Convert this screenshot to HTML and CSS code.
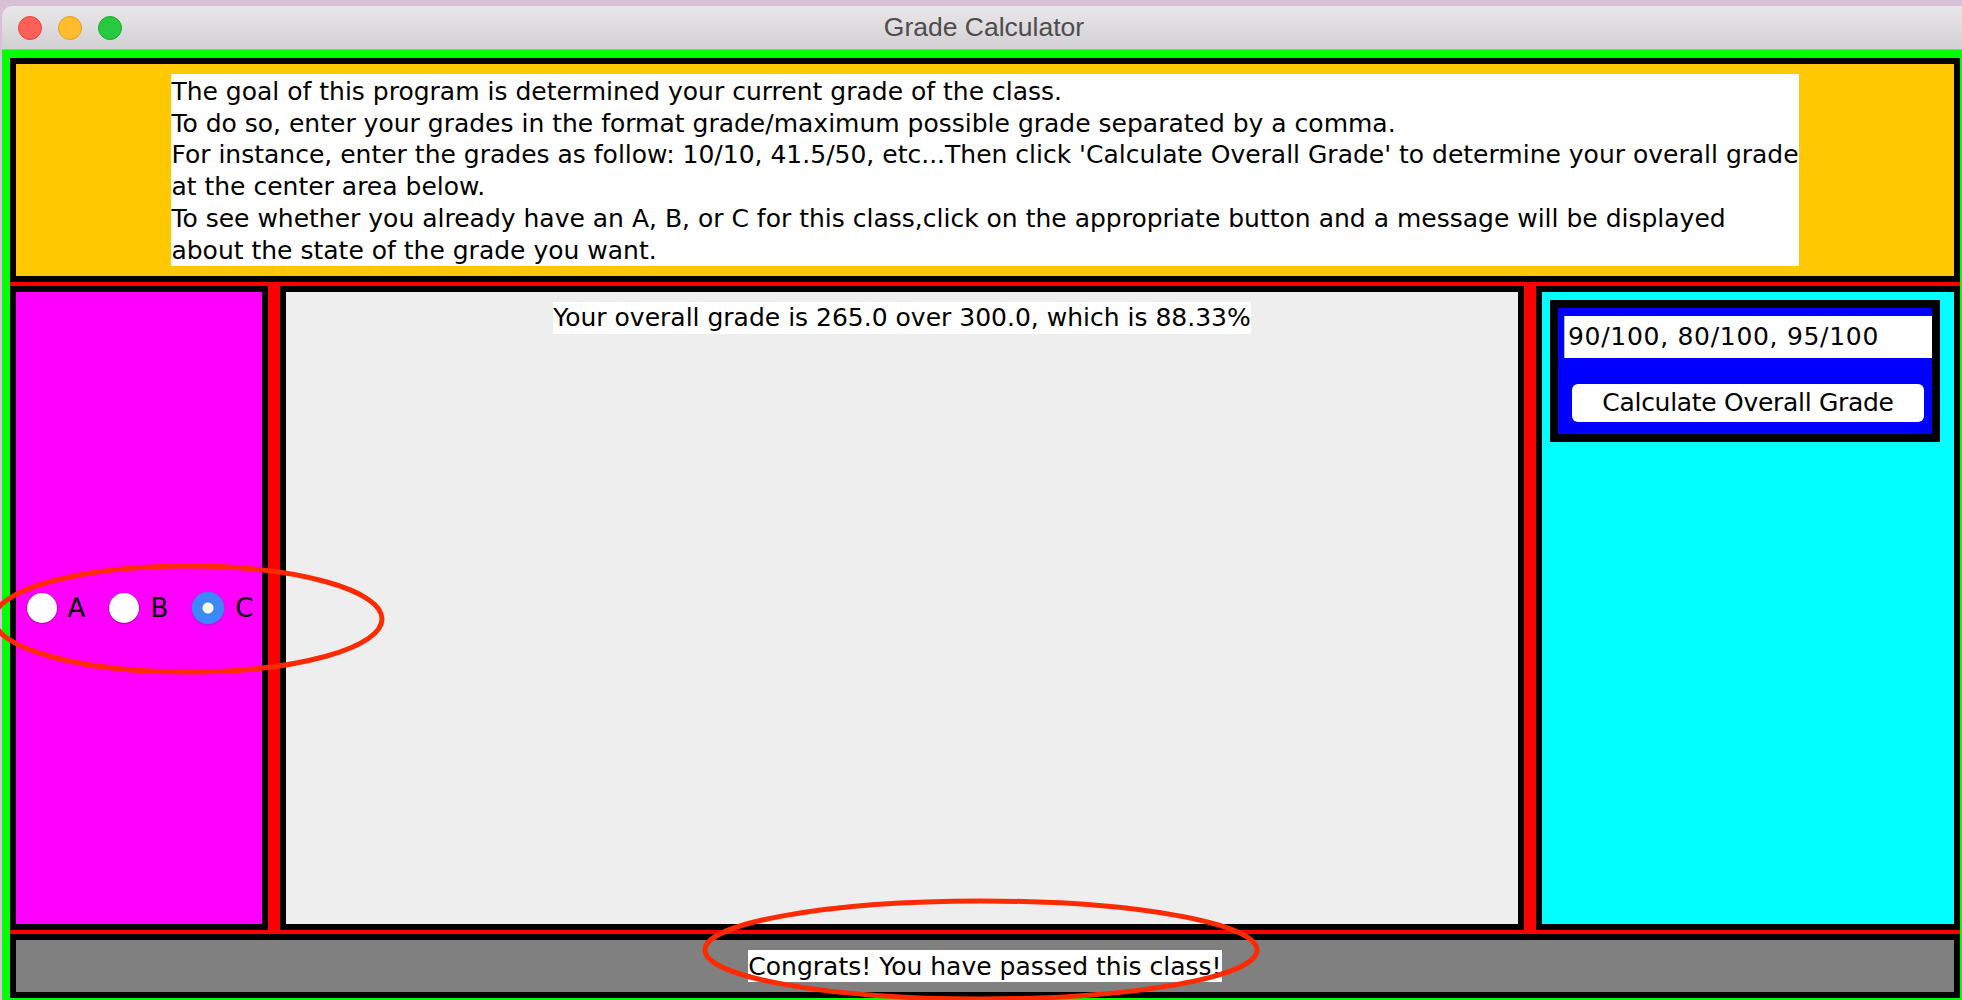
FILE: index.html
```html
<!DOCTYPE html>
<html lang="en">
<head>
<meta charset="utf-8">
<title>Grade Calculator</title>
<link rel="stylesheet" href="styles.css">
</head>
<body>
<div class="window">
  <div class="titlebar">
    <div class="lights">
      <span class="light red"></span>
      <span class="light yellow"></span>
      <span class="light green"></span>
    </div>
    <div class="title">Grade Calculator</div>
    <div class="spacer"></div>
  </div>
  <div class="content">
    <div class="panel north">
      <div class="intro">The goal of this program is determined your current grade of the class.<br>To do so, enter your grades in the format grade/maximum possible grade separated by a comma.<br>For instance, enter the grades as follow: 10/10, 41.5/50, etc...Then click 'Calculate Overall Grade' to determine your overall grade<br>at the center area below.<br>To see whether you already have an A, B, or C for this class,click on the appropriate button and a message will be displayed<br>about the state of the grade you want.</div>
    </div>
    <div class="middle">
      <div class="panel west">
        <div class="radios">
          <div class="radio"><span class="dot"></span><span class="rlabel">A</span></div>
          <div class="radio"><span class="dot"></span><span class="rlabel">B</span></div>
          <div class="radio"><span class="dot on"></span><span class="rlabel">C</span></div>
        </div>
      </div>
      <div class="panel center">
        <div class="result">Your overall grade is 265.0 over 300.0, which is 88.33%</div>
      </div>
      <div class="panel east">
        <div class="inputbox">
          <div class="field">90/100, 80/100, 95/100</div>
          <div class="btn">Calculate Overall Grade</div>
        </div>
      </div>
    </div>
    <div class="panel south">
      <div class="msg">Congrats! You have passed this class!</div>
    </div>
  </div>
</div>
<svg class="annotations" width="1962" height="1000" viewBox="0 0 1962 1000">
  <ellipse cx="188" cy="619" rx="194" ry="53" fill="none" stroke="#ff2a00" stroke-width="5"/>
  <ellipse cx="981" cy="950" rx="276" ry="49" fill="none" stroke="#ff2a00" stroke-width="5"/>
</svg>
</body>
</html>
```

FILE: styles.css
```css
html, body {
  margin: 0;
  padding: 0;
  overflow: hidden;
}

body {
  width: 1962px;
  height: 1000px;
  box-sizing: border-box;
  padding: 6px 0 0 2px;
  background: #d8c0d6;
  position: relative;
  font-family: "DejaVu Sans", "Liberation Sans", sans-serif;
  color: #000;
}

.window {
  width: 1960px;
  height: 994px;
  display: flex;
  flex-direction: column;
  border-top-left-radius: 10px;
  overflow: hidden;
  background: #d4d2d4;
}

.titlebar {
  height: 44px;
  box-sizing: border-box;
  border-bottom: 1px solid #b3b1b3;
  background: linear-gradient(#e9e7e9, #d2d0d2);
  display: grid;
  grid-template-columns: 1fr auto 1fr;
  align-items: center;
}

.lights {
  display: flex;
  gap: 16px;
  padding-left: 16px;
}

.light {
  width: 24px;
  height: 24px;
  box-sizing: border-box;
  border-radius: 50%;
}

.light.red { background: #fe5f57; border: 1px solid #e2463f; }
.light.yellow { background: #febc2e; border: 1px solid #e1a116; }
.light.green { background: #28c840; border: 1px solid #14ae2b; }

.title {
  font-family: "Liberation Sans", Arial, sans-serif;
  font-size: 26.5px;
  color: #4d4d4d;
  padding-left: 4px;
}

.content {
  flex: 1;
  background: #ff0000;
  border: 8px solid #00ff00;
  border-right-width: 2px;
  border-bottom-width: 2px;
  display: flex;
  flex-direction: column;
  gap: 4px;
  min-height: 0;
}

.panel {
  border: 6px solid #000;
}

.north {
  background: #ffc800;
  padding: 10px 0;
  display: flex;
  justify-content: center;
}

.intro {
  background: #fff;
  font-size: 25px;
  line-height: 31.7px;
  padding-top: 2px;
  white-space: nowrap;
}

.middle {
  flex: 1;
  display: flex;
  gap: 12px;
  min-height: 0;
}

.west {
  width: 246px;
  background: #ff00ff;
  display: flex;
  align-items: center;
  justify-content: center;
}

.radios {
  display: flex;
  align-items: center;
  gap: 24px;
  padding-left: 2px;
}

.radio {
  display: flex;
  align-items: center;
  gap: 11px;
  font-size: 26px;
}

.dot {
  width: 30px;
  height: 30px;
  border-radius: 50%;
  background: radial-gradient(circle at 50% 45%, #ffffff 0 60%, #f2f2f2 85%, #d8d8d8 100%);
  box-shadow: 0 0 0 1px rgba(0, 0, 0, 0.12), 0 1px 2px rgba(0, 0, 0, 0.25);
}

.dot.on {
  width: 32px;
  height: 32px;
  background: radial-gradient(circle, #ffffff 0 5px, #3c89f6 6px);
  box-shadow: 0 0 0 1px rgba(60, 110, 240, 0.35), 0 1px 2px rgba(0, 0, 0, 0.25);
}

.center {
  flex: 1;
  background: #eeeeee;
  display: flex;
  justify-content: center;
  align-items: flex-start;
  padding-top: 10px;
}

.result {
  background: #fff;
  font-size: 25px;
  line-height: 32px;
  white-space: nowrap;
}

.east {
  background: #00ffff;
  padding: 8px 0 0 8px;
  box-sizing: border-box;
  width: 424px;
}

.inputbox {
  border: 8px solid #000;
  background: #0000ff;
  padding: 8px 0 12px 6px;
  box-sizing: border-box;
  width: 390px;
}

.field {
  height: 42px;
  box-sizing: border-box;
  background: #fff;
  border-left: 1px solid #b9b9b9;
  font-size: 25px;
  line-height: 42px;
  padding-left: 3px;
  letter-spacing: 0.7px;
  white-space: nowrap;
}

.btn {
  width: 352px;
  height: 38px;
  margin: 26px 0 0 8px;
  background: #fff;
  border-radius: 6px;
  text-align: center;
  font-size: 25px;
  line-height: 38px;
  letter-spacing: -0.3px;
}

.south {
  background: #808080;
  padding: 10px 0;
  display: flex;
  justify-content: center;
}

.msg {
  background: #fff;
  font-size: 25px;
  line-height: 31px;
  padding-top: 1px;
  white-space: nowrap;
}

.annotations {
  position: absolute;
  left: 0;
  top: 0;
  pointer-events: none;
}
```
